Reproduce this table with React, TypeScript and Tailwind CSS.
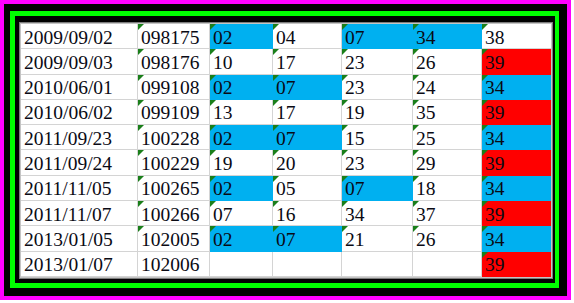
type Fill = 'b' | 'r' | '';

const rows: [string, string, [string, Fill][]][] = [
  ['2009/09/02', '098175', [['02', 'b'], ['04', ''], ['07', 'b'], ['34', 'b'], ['38', '']]],
  ['2009/09/03', '098176', [['10', ''], ['17', ''], ['23', ''], ['26', ''], ['39', 'r']]],
  ['2010/06/01', '099108', [['02', 'b'], ['07', 'b'], ['23', ''], ['24', ''], ['34', 'b']]],
  ['2010/06/02', '099109', [['13', ''], ['17', ''], ['19', ''], ['35', ''], ['39', 'r']]],
  ['2011/09/23', '100228', [['02', 'b'], ['07', 'b'], ['15', ''], ['25', ''], ['34', 'b']]],
  ['2011/09/24', '100229', [['19', ''], ['20', ''], ['23', ''], ['29', ''], ['39', 'r']]],
  ['2011/11/05', '100265', [['02', 'b'], ['05', ''], ['07', 'b'], ['18', ''], ['34', 'b']]],
  ['2011/11/07', '100266', [['07', ''], ['16', ''], ['34', ''], ['37', ''], ['39', 'r']]],
  ['2013/01/05', '102005', [['02', 'b'], ['07', 'b'], ['21', ''], ['26', ''], ['34', 'b']]],
  ['2013/01/07', '102006', [['', ''], ['', ''], ['', ''], ['', ''], ['39', 'r']]],
];

const numWidths = ['w-[63px]', 'w-[69px]', 'w-[71px]', 'w-[69px]', 'w-[69px]'];

function Flag() {
  // little green "number stored as text" marker
  return (
    <svg className="absolute left-0 top-0" width="6" height="6" viewBox="0 0 6 6">
      <polygon points="0,0 6,0 0,6" fill="#1a7f1a" />
    </svg>
  );
}

function Cell({ text, fill, width, flag, last }: { text: string; fill: Fill; width: string; flag: boolean; last?: boolean }) {
  const bg =
    fill === 'b'
      ? 'bg-[#00b0f0] border-[#00b0f0]'
      : fill === 'r'
        ? 'bg-[#ff0000] border-[#ff0000]'
        : 'bg-white border-[#d4d4d4]';
  return (
    <div className={`relative flex items-center pl-[3px] pt-[2px] border-b ${last ? '' : 'border-r'} ${bg} ${width}`}>
      {flag && <Flag />}
      {text}
    </div>
  );
}

export default function App() {
  return (
    <div className="w-[574px] h-[303px] bg-white">
      <div className="w-[571px] h-[300px] bg-[#ff00ff] p-[4px]">
        <div className="h-full bg-black pl-[6px] pt-[7px] pr-[8px] pb-[8px]">
          <div className="h-full border-[5px] border-r-4 border-[#00ff00] bg-black pl-[4px] pt-[6px] pr-[2px] pb-[4px]">
            <div className="h-full bg-[#7c7c7c] p-px">
              <div className="h-full bg-[#c4c4c4] p-px">
                <div className="h-full bg-white text-[19.5px] text-[#0a0a14] font-['Liberation_Serif',serif]">
                  {rows.map(([date, code, nums], i) => (
                    <div key={date} className="flex h-[25.3px]">
                      <Cell text={date} fill="" width="w-[117px]" flag={false} />
                      <Cell text={code} fill="" width="w-[72px]" flag={i < 9} />
                      {nums.map(([n, f], j) => (
                        <Cell key={j} text={n} fill={f} width={numWidths[j]} flag={n !== ''} last={j === 4} />
                      ))}
                    </div>
                  ))}
                </div>
              </div>
            </div>
          </div>
        </div>
      </div>
    </div>
  );
}
